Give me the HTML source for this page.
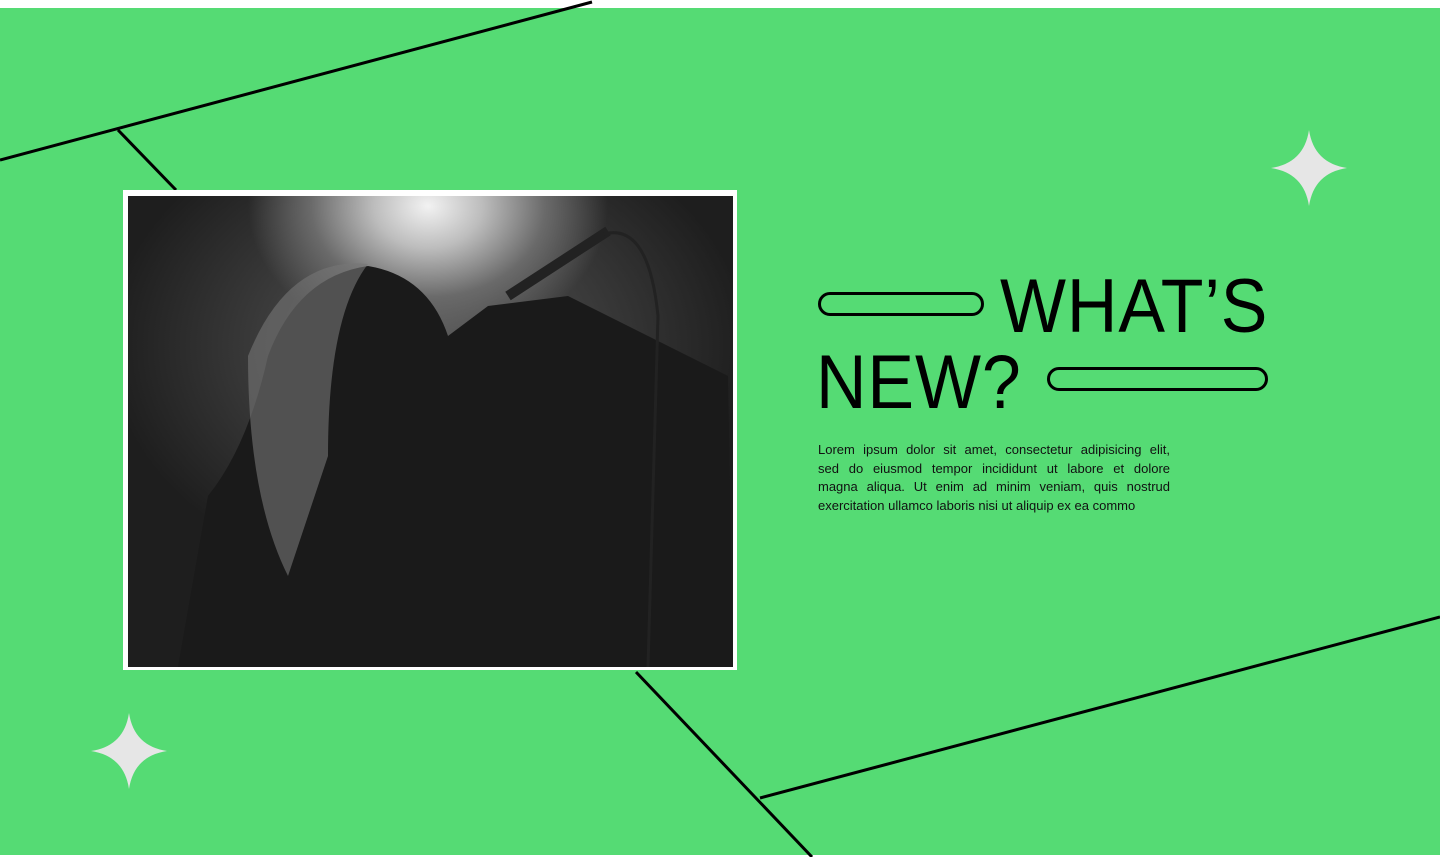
<!DOCTYPE html>
<html><head><meta charset="utf-8"><style>
html,body{margin:0;padding:0;}
body{width:1440px;height:857px;position:relative;overflow:hidden;background:#fff;font-family:"Liberation Sans",sans-serif;}
.bg{position:absolute;left:0;top:8px;width:1440px;height:847px;background:#55db74;}
svg.l{position:absolute;left:0;top:0;}
.frame{position:absolute;left:123px;top:190px;width:614px;height:480px;background:#fff;}
.photo{position:absolute;left:128px;top:196px;width:605px;height:471px;overflow:hidden;
background:radial-gradient(ellipse 180px 140px at 300px 10px,#f2f2f2 0%,#bdbdbd 30%,#6a6a6a 65%,transparent 100%),
radial-gradient(ellipse 400px 300px at 300px 150px,#5a5a5a,#1e1e1e 80%),#111;}
.h{position:absolute;font-size:76px;line-height:1;color:#000;transform-origin:0 0;transform:scaleX(0.92);letter-spacing:1px;}
.pill{position:absolute;border:3px solid #000;border-radius:12px;box-sizing:border-box;}
.p{position:absolute;left:818px;top:441px;width:352px;font-size:13px;line-height:18.7px;color:#111;}
.p div{text-align:justify;text-align-last:justify;white-space:nowrap;}
.p div.last{text-align-last:left;}
</style></head><body>
<div class="bg"></div>
<svg class="l" width="1440" height="857">
<g stroke="#000" stroke-width="3" fill="none">
<line x1="0" y1="160" x2="592" y2="2"/>
<line x1="118" y1="130" x2="176" y2="190"/>
<line x1="636" y1="672" x2="812" y2="857"/>
<line x1="760" y1="798" x2="1440" y2="617"/>
</g>
<g fill="#e6e6e6">
<path transform="translate(1309,168)" d="M0,-38 Q5,-5 38,0 Q5,5 0,38 Q-5,5 -38,0 Q-5,-5 0,-38Z"/>
<path transform="translate(129,751)" d="M0,-38 Q5,-5 38,0 Q5,5 0,38 Q-5,5 -38,0 Q-5,-5 0,-38Z"/>
</g>
</svg>
<div class="frame"></div>
<div class="photo">
<svg width="605" height="471">
<path d="M50,471 L80,300 Q120,250 140,160 Q170,80 240,70 Q300,80 320,140 L360,110 L440,100 L520,140 L600,180 L605,471Z" fill="#1a1a1a"/>
<path d="M120,160 Q160,60 240,68 Q200,120 200,260 L160,380 Q120,300 120,160Z" fill="#777" opacity="0.6"/>
<line x1="380" y1="100" x2="480" y2="35" stroke="#222" stroke-width="10"/>
<path d="M470,40 Q520,20 530,120 L520,471" stroke="#222" stroke-width="3" fill="none"/>
</svg>
</div>
<div class="pill" style="left:818px;top:292px;width:166px;height:24px;"></div>
<div class="h" style="left:1000px;top:269px;">WHAT’S</div>
<div class="h" style="left:816px;top:345px;">NEW?</div>
<div class="pill" style="left:1047px;top:367px;width:221px;height:24px;"></div>
<div class="p">
<div>Lorem ipsum dolor sit amet, consectetur adipisicing elit,</div>
<div>sed do eiusmod tempor incididunt ut labore et dolore</div>
<div>magna aliqua. Ut enim ad minim veniam, quis nostrud</div>
<div class="last">exercitation ullamco laboris nisi ut aliquip ex ea commo</div>
</div>
</body></html>
